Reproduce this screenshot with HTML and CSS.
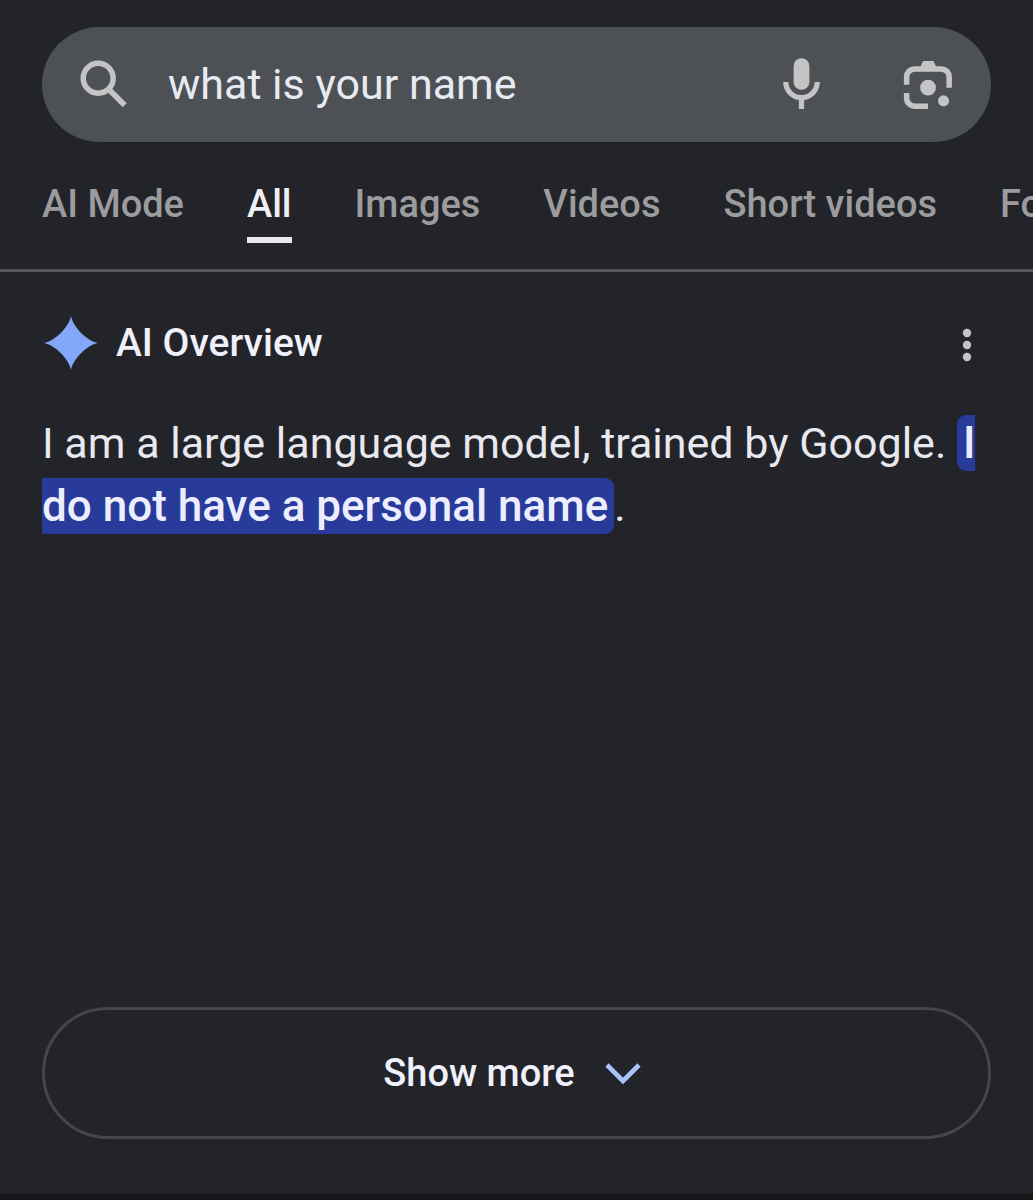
FILE: index.html
```html
<!DOCTYPE html>
<html lang="en">
<head>
  <meta charset="utf-8">
  <meta name="viewport" content="width=device-width, initial-scale=1">
  <title>what is your name</title>
  <link rel="stylesheet" href="styles.css">
</head>
<body class="page">
  <header class="header">
    <form class="search" role="search">
      <button class="icon-button" type="submit" aria-label="Search">
        <svg class="icon" viewBox="0 0 24 24" aria-hidden="true">
          <circle cx="9.6" cy="9.6" r="5.7" fill="none" stroke="currentColor" stroke-width="2.1"/>
          <path d="M13.6 13.8l6.1 6.1" fill="none" stroke="currentColor" stroke-width="2.2"/>
        </svg>
      </button>
      <input class="search-input" type="text" aria-label="Search query" value="what is your name">
      <div class="search-tools">
        <button class="icon-button" type="button" aria-label="Search by voice">
          <svg class="icon" viewBox="0 0 24 24" aria-hidden="true" fill="currentColor">
            <rect x="9" y="2" width="6" height="12" rx="3"/>
            <path d="M17 11a5 5 0 0 1-10 0H5a7 7 0 0 0 6 6.92v3.4h2v-3.4A7 7 0 0 0 19 11z"/>
          </svg>
        </button>
        <button class="icon-button" type="button" aria-label="Search by image">
          <svg class="icon" viewBox="0 0 24 24" aria-hidden="true" fill="currentColor">
            <path d="M10.3 3h4l.9 2h2.1a4 4 0 0 1 4 4v4.2h-2.1V9.1a2 2 0 0 0-2-2H7.1a2 2 0 0 0-2 2v3H3V9a4 4 0 0 1 4-4h2.4z"/>
            <path d="M3 15.2h2.1v2a2 2 0 0 0 2 2h5.1v2.1H7a4 4 0 0 1-4-4z"/>
            <circle cx="12.2" cy="13.2" r="3"/>
            <circle cx="18.1" cy="18.2" r="2.1"/>
          </svg>
        </button>
      </div>
    </form>
    <nav class="tabs" aria-label="Search filters">
      <a class="tab" href="#ai-mode">AI Mode</a>
      <a class="tab tab-active" href="#all" aria-current="page">All</a>
      <a class="tab" href="#images">Images</a>
      <a class="tab" href="#videos">Videos</a>
      <a class="tab" href="#short-videos">Short videos</a>
      <a class="tab" href="#forums">Forums</a>
    </nav>
  </header>
  <main class="overview">
    <div class="overview-head">
      <svg class="spark" viewBox="0 0 54 54" aria-hidden="true">
        <path d="M27 0C29 11 43 25 54 27C43 29 29 43 27 54C25 43 11 29 0 27C11 25 25 11 27 0Z" fill="#83a8fb"/>
      </svg>
      <h1 class="overview-title">AI Overview</h1>
      <button class="more-button" type="button" aria-label="More options">
        <svg class="more-icon" viewBox="0 0 48 48" aria-hidden="true" fill="currentColor">
          <circle cx="24" cy="14" r="4.2"/>
          <circle cx="24" cy="26" r="4.2"/>
          <circle cx="24" cy="38" r="4.2"/>
        </svg>
      </button>
    </div>
    <p class="answer">I am a large language model, trained by Google. <mark class="highlight">I do not have a personal name</mark>.</p>
    <button class="show-more" type="button">
      <span>Show more</span>
      <svg class="chevron" viewBox="0 0 36 24" aria-hidden="true">
        <path d="M2 4l16 16L34 4" fill="none" stroke="#a9c3fa" stroke-width="4.6"/>
      </svg>
    </button>
  </main>
  <footer class="page-end"></footer>
</body>
</html>
```

FILE: styles.css
```css
* {
  box-sizing: border-box;
}

.page {
  display: flex;
  flex-direction: column;
  min-height: 100vh;
  margin: 0;
  background: #232429;
  color: #e8e8f0;
  font-family: Roboto, "Liberation Sans", sans-serif;
  overflow-x: hidden;
}

.header {
  padding-top: 27px;
  border-bottom: 3px solid #55565b;
}

.search {
  display: flex;
  align-items: center;
  gap: 32px;
  height: 115px;
  margin: 0 42px;
  padding: 0 32px 0 31px;
  border-radius: 58px;
  background: #4d5155;
}

.search-input {
  flex: 1;
  min-width: 0;
  padding: 0 0 2px;
  border: 0;
  outline: 0;
  background: transparent;
  color: #e8eaf2;
  font: 400 43px/56px Roboto, "Liberation Sans", sans-serif;
}

.search-tools {
  display: flex;
  gap: 63px;
}

.icon-button,
.more-button {
  display: flex;
  padding: 0;
  border: 0;
  background: transparent;
  color: #c4c4c5;
}

.icon {
  width: 63px;
  height: 63px;
}

.tabs {
  display: flex;
  gap: 63px;
  padding: 40px 42px 26px;
  overflow: hidden;
}

.tab {
  flex: none;
  padding-bottom: 11px;
  border-bottom: 6px solid transparent;
  color: #9c9c9e;
  font-size: 38px;
  font-weight: 500;
  line-height: 44px;
  text-decoration: none;
}

.tab-active {
  border-bottom-color: #e8e8f0;
  color: #f0f0f4;
}

.overview {
  display: flex;
  flex: 1;
  flex-direction: column;
  padding: 44px 42px 55px;
}

.overview-head {
  display: flex;
  align-items: center;
  gap: 18px;
  padding-left: 2px;
}

.spark {
  width: 54px;
  height: 54px;
}

.overview-title {
  flex: 1;
  margin: 0;
  color: #f0f0fa;
  font-size: 39px;
  font-weight: 500;
  line-height: 54px;
}

.more-icon {
  width: 48px;
  height: 48px;
}

.answer {
  margin: 42px 0;
  font-size: 43px;
  line-height: 63px;
}

.highlight {
  padding: 2px 6px;
  border-radius: 9px;
  background: #283b9a;
  color: #eceeff;
  font-size: 44px;
  font-weight: 500;
  line-height: 1;
}

.show-more {
  display: flex;
  align-items: center;
  justify-content: center;
  gap: 30px;
  height: 132px;
  margin-top: auto;
  padding: 0 9px 0 0;
  border: 3px solid #44454f;
  border-radius: 66px;
  background: transparent;
  color: #f0f0fa;
  font: 500 38px/48px Roboto, "Liberation Sans", sans-serif;
}

.chevron {
  width: 36px;
  height: 24px;
}

.page-end {
  height: 6px;
  background: #17171b;
}
```
